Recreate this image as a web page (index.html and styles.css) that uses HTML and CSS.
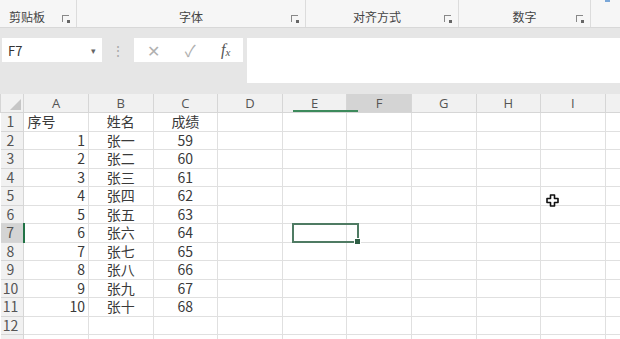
FILE: index.html
```html
<!DOCTYPE html>
<html lang="zh-CN">
<head>
    <meta charset="UTF-8">
    <title>成绩表 - Excel</title>
    <link rel="stylesheet" href="styles.css">
</head>
<body>
    <div class="ribbon">
        <div class="group g-clip"><span class="label">剪贴板</span><span class="launcher"></span></div>
        <div class="group g-font"><span class="label">字体</span><span class="launcher"></span></div>
        <div class="group g-align"><span class="label">对齐方式</span><span class="launcher"></span></div>
        <div class="group g-num"><span class="label">数字</span><span class="launcher"></span></div>
        <div class="group g-more"><span class="blue-mark"></span></div>
    </div>

    <div class="formula-bar">
        <div class="name-box">
            <span>F7</span>
            <span class="drop">&#9662;</span>
        </div>
        <div class="grip">&#8942;</div>
        <div class="fx-buttons">
            <span class="btn">&#10005;</span>
            <span class="btn">&#10003;</span>
            <span class="btn fx"><i>f</i><sub>x</sub></span>
        </div>
        <div class="formula-input"></div>
    </div>

    <div class="sheet">
        <table class="grid">
            <colgroup>
                <col class="c-rh">
                <col class="c-col"><col class="c-col"><col class="c-col"><col class="c-col"><col class="c-col">
                <col class="c-col"><col class="c-col"><col class="c-col"><col class="c-col"><col class="c-col">
            </colgroup>
            <thead>
                <tr>
                    <th class="corner"><span class="tri"></span></th>
                    <th>A</th><th>B</th><th>C</th><th>D</th><th>E</th>
                    <th class="active">F</th><th>G</th><th>H</th><th>I</th><th></th>
                </tr>
            </thead>
            <tbody id="rows"></tbody>
        </table>

        <div class="col-mark"></div>
        <div class="selection"><span class="handle"></span></div>
        <svg class="cursor" width="13" height="13" viewBox="0 0 13 13">
            <path d="M4.5 1h4v3.5H12v4H8.5V12h-4V8.5H1v-4h3.5z" fill="#fff" stroke="#111" stroke-width="1.6" stroke-linejoin="round"/>
        </svg>
    </div>

    <script>
        const names = ["一", "二", "三", "四", "五", "六", "七", "八", "九", "十"];
        const tbody = document.getElementById('rows');

        for (let r = 1; r <= 13; r++) {
            const tr = document.createElement('tr');
            // the 13th row only peeks in at the bottom edge, no label
            let cells = '<th class="rh' + (r === 7 ? ' active' : '') + '">' + (r < 13 ? r : '') + '</th>';
            let a = '', b = '', c = '';
            if (r === 1) {
                a = '序号'; b = '姓名'; c = '成绩';
            } else if (r <= 11) {
                a = r - 1; b = '张' + names[r - 2]; c = 57 + r;
            }
            cells += '<td class="' + (r === 1 ? 'left' : 'num') + '">' + a + '</td>';
            cells += '<td class="mid">' + b + '</td>';
            cells += '<td class="mid">' + c + '</td>';
            for (let i = 0; i < 7; i++) cells += '<td></td>';
            tr.innerHTML = cells;
            tbody.appendChild(tr);
        }
    </script>
</body>
</html>
```

FILE: styles.css
```css
body {
    margin: 0;
    width: 620px;
    height: 339px;
    overflow: hidden;
    font-family: "Noto Sans CJK SC", "Noto Sans", sans-serif;
    background: #e6e6e6;
    color: #333;
}

/* ribbon */
.ribbon {
    display: flex;
    height: 27px;
    background: #f6f6f6;
    border-bottom: 1px solid #d8d8d8;
}

.group {
    position: relative;
    border-right: 1px solid #dcdcdc;
    display: flex;
    justify-content: center;
    align-items: flex-end;
    padding-bottom: 1px;
    box-sizing: border-box;
}

.g-clip { width: 77px; justify-content: flex-start; padding-left: 9px; }
.g-font { width: 229px; }
.g-align { width: 153px; padding-right: 10px; }
.g-num { width: 132px; }
.g-more { flex: 1; border-right: none; }

.label {
    font-size: 12px;
    color: #444;
    line-height: 18px;
}

.launcher {
    position: absolute;
    right: 7px;
    bottom: 5px;
    width: 6px;
    height: 6px;
    border-top: 1px solid #888;
    border-left: 1px solid #888;
}

.launcher::after {
    content: "";
    position: absolute;
    right: -1px;
    bottom: -1px;
    width: 3px;
    height: 3px;
    background: #666;
}

.blue-mark {
    position: absolute;
    left: 14px;
    top: 0;
    width: 5px;
    height: 2px;
    background: #7aa7d8;
}

/* formula bar */
.formula-bar {
    display: flex;
    align-items: flex-start;
    height: 66px;
    padding: 10px 0 0 2px;
    box-sizing: border-box;
}

.name-box {
    width: 100px;
    height: 24px;
    background: #fff;
    display: flex;
    justify-content: space-between;
    align-items: center;
    padding: 0 6px;
    box-sizing: border-box;
    font-size: 13px;
    color: #333;
}

.drop {
    font-size: 9px;
    color: #666;
}

.grip {
    width: 32px;
    text-align: center;
    color: #aaa;
    font-size: 14px;
    line-height: 24px;
}

.fx-buttons {
    width: 109px;
    height: 24px;
    background: #fff;
    display: flex;
    justify-content: space-around;
    align-items: center;
    color: #b0b0b0;
    font-size: 16px;
}

.fx {
    font-family: "Liberation Serif", serif;
    color: #555;
    font-size: 16px;
}

.fx sub {
    font-size: 11px;
    font-style: italic;
    vertical-align: -1px;
}

.formula-input {
    flex: 1;
    height: 45px;
    background: #fff;
    margin-left: 4px;
}

/* grid */
.sheet {
    position: relative;
    background: #fff;
}

.grid {
    border-collapse: collapse;
    table-layout: fixed;
    width: 670px;
    font-size: 14px;
    color: #3a3a3a;
}

.c-rh { width: 23.4px; }
.c-col { width: 64.6px; }

.grid th,
.grid td {
    height: 18.5px;
    padding: 0;
    border: 1px solid #e0e0e0;
    line-height: 17px;
    white-space: nowrap;
    box-sizing: border-box;
}

.grid thead th {
    background: #f1f1f1;
    font-weight: normal;
    font-size: 13px;
    color: #555;
    border-color: #d6d6d6;
    border-top: none;
    font-family: "Open Sans", sans-serif;
}

.grid thead th.active {
    background: #d4d4d4;
}

.corner {
    position: relative;
    border-left: none;
}

.tri {
    position: absolute;
    right: 2px;
    bottom: 2px;
    width: 0;
    height: 0;
    border-left: 11px solid transparent;
    border-bottom: 11px solid #c6c6c6;
}

.grid .rh {
    background: #f1f1f1;
    font-weight: normal;
    color: #555;
    border-color: #d6d6d6;
    border-left: none;
    text-align: center;
    padding-right: 3px;
}

.grid .rh.active {
    background: #d4d4d4;
    border-right: 2px solid #217346;
}

.num {
    text-align: right;
    padding-right: 3px !important;
}

.left {
    text-align: left;
    padding-left: 3px !important;
}

.mid {
    text-align: center;
}

.col-mark {
    position: absolute;
    left: 293px;
    top: 16px;
    width: 65px;
    height: 2px;
    background: #3d8a5c;
}

.selection {
    position: absolute;
    left: 292px;
    top: 129px;
    width: 67px;
    height: 20px;
    border: 2px solid #4f7b63;
    box-sizing: border-box;
}

.handle {
    position: absolute;
    right: -4px;
    bottom: -4px;
    width: 5px;
    height: 5px;
    background: #2f5f45;
    border: 1px solid #fff;
}

.cursor {
    position: absolute;
    left: 546px;
    top: 100px;
}
```
